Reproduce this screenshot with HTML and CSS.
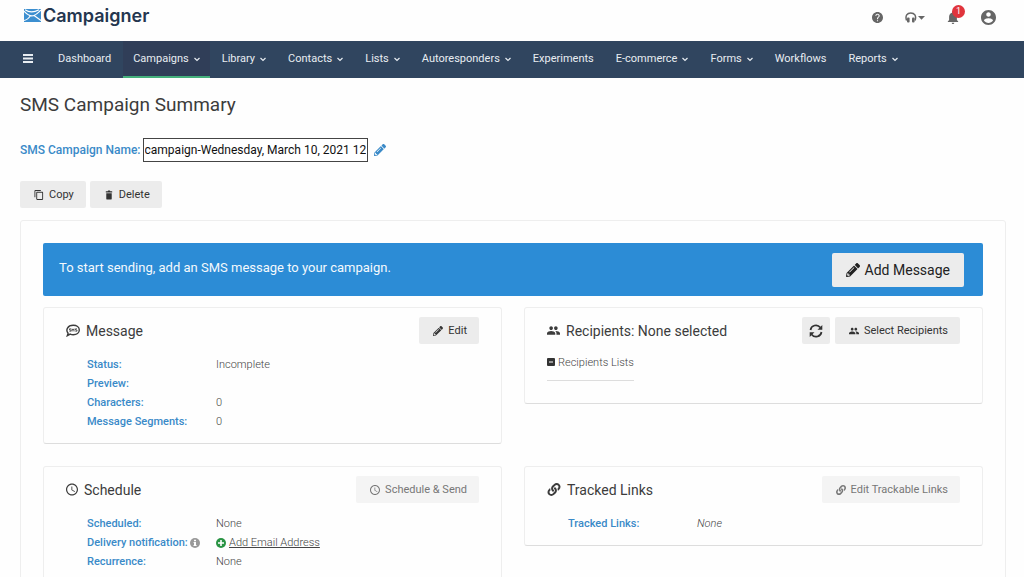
FILE: index.html
```html
<!DOCTYPE html>
<html lang="en">
<head>
    <meta charset="UTF-8">
    <meta name="viewport" content="width=device-width, initial-scale=1.0">
    <title>SMS Campaign Summary</title>
    <link rel="stylesheet" href="styles.css">
</head>
<body>
    <!-- shared icons -->
    <svg class="sprite" aria-hidden="true">
        <symbol id="i-pencil" viewBox="0 0 512 512"><path d="M497.9 142.1l-46.1 46.1c-4.7 4.7-12.3 4.7-17 0l-111-111c-4.7-4.7-4.7-12.3 0-17l46.1-46.1c18.7-18.7 49.1-18.7 67.9 0l60.1 60.1c18.8 18.7 18.8 49.1 0 67.9zM284.2 99.8L21.6 362.4.4 483.9c-2.9 16.4 11.4 30.6 27.8 27.8l121.5-21.3 262.6-262.6c4.7-4.7 4.7-12.3 0-17l-111-111c-4.8-4.7-12.4-4.7-17.1 0zM124.1 339.9c-5.5-5.5-5.5-14.3 0-19.8l154-154c5.5-5.5 14.3-5.5 19.8 0s5.5 14.3 0 19.8l-154 154c-5.5 5.5-14.3 5.5-19.8 0zM88 424h48v36.3l-64.500 11.300-31.100-31.100L51.700 376H88v48z"/></symbol>
        <symbol id="i-link" viewBox="0 0 512 512"><path d="M326.612 185.391c59.747 59.809 58.927 155.698.36 214.59-.11.12-.24.25-.36.37l-67.2 67.2c-59.27 59.27-155.699 59.262-214.96 0-59.27-59.26-59.27-155.7 0-214.96l37.106-37.106c9.84-9.84 26.786-3.3 27.294 10.606.648 17.722 3.826 35.527 9.69 52.721 1.986 5.822.567 12.262-3.783 16.612l-13.087 13.087c-28.026 28.026-28.905 73.66-1.155 101.96 28.024 28.579 74.086 28.749 102.325.51l67.2-67.19c28.191-28.191 28.073-73.757 0-101.83-3.701-3.694-7.429-6.564-10.341-8.569a16.037 16.037 0 0 1-6.947-12.606c-.396-10.567 3.348-21.456 11.698-29.806l21.054-21.055c5.521-5.521 14.182-6.199 20.584-1.731a152.482 152.482 0 0 1 20.522 17.197zM467.547 44.449c-59.261-59.262-155.69-59.27-214.96 0l-67.2 67.2c-.12.12-.25.25-.36.37-58.566 58.892-59.387 154.781.36 214.59a152.454 152.454 0 0 0 20.521 17.196c6.402 4.468 15.064 3.789 20.584-1.731l21.054-21.055c8.35-8.35 12.094-19.239 11.698-29.806a16.037 16.037 0 0 0-6.947-12.606c-2.912-2.005-6.64-4.875-10.341-8.569-28.073-28.073-28.191-73.639 0-101.83l67.2-67.19c28.239-28.239 74.3-28.069 102.325.51 27.75 28.3 26.872 73.934-1.155 101.96l-13.087 13.087c-4.35 4.35-5.769 10.79-3.783 16.612 5.864 17.194 9.042 34.999 9.69 52.721.509 13.906 17.454 20.446 27.294 10.606l37.106-37.106c59.271-59.259 59.271-155.699.001-214.959z"/></symbol>
        <symbol id="i-clock" viewBox="2 2 20 20"><path d="M11.99 2C6.47 2 2 6.48 2 12s4.47 10 9.99 10C17.52 22 22 17.52 22 12S17.52 2 11.99 2zM12 20c-4.42 0-8-3.58-8-8s3.58-8 8-8 8 3.58 8 8-3.58 8-8 8zm.5-13H11v6l5.25 3.15.75-1.23-4.5-2.67z"/></symbol>
        <symbol id="i-group" viewBox="1 1 22 22"><path d="M16 11c1.66 0 2.99-1.34 2.99-3S17.66 5 16 5c-1.66 0-3 1.34-3 3s1.34 3 3 3zm-8 0c1.66 0 2.99-1.34 2.99-3S9.66 5 8 5C6.34 5 5 6.34 5 8s1.34 3 3 3zm0 2c-2.33 0-7 1.17-7 3.5V19h14v-2.5c0-2.33-4.67-3.5-7-3.5zm8 0c-.29 0-.62.02-.97.05 1.16.84 1.97 1.97 1.97 3.45V19h6v-2.5c0-2.33-4.67-3.5-7-3.5z"/></symbol>
        <symbol id="i-down" viewBox="0 0 6 6"><path d="M.5 2L3 4.400 5.500 2" fill="none" stroke="currentColor" stroke-width="1.200"/></symbol>
    </svg>

    <header class="topbar">
        <a class="logo" href="#">
            <svg viewBox="0 0 17 13" aria-hidden="true">
                <rect width="17" height="13" fill="#3c8fd0"/>
                <path d="M0 2.200C4 6.500 7.500 7.500 10 6.500 13 5.300 15 2.800 17 1M0 11.500C2.500 11 5 9 6.500 6.500M10 6.500L17 11.500M1 .8C5 3.500 10 3.500 15 .8" fill="none" stroke="#fff" stroke-width="1.100"/>
            </svg>
            <span>Campaigner</span>
        </a>
        <div class="tools">
            <button class="tool" aria-label="Help">
                <svg class="help" viewBox="2 2 20 20"><path d="M12 2C6.480 2 2 6.480 2 12s4.480 10 10 10 10-4.480 10-10S17.520 2 12 2zm1 17h-2v-2h2v2zm2.070-7.750l-.9.92C13.450 12.900 13 13.500 13 15h-2v-.5c0-1.100.45-2.100 1.170-2.830l1.240-1.260c.37-.36.59-.86.59-1.410 0-1.100-.9-2-2-2s-2 .9-2 2H8c0-2.210 1.790-4 4-4s4 1.790 4 4c0 .88-.36 1.680-.93 2.250z"/></svg>
            </button>
            <button class="tool" aria-label="Support">
                <svg class="headset" viewBox="0 0 20 11"><path d="M1.600 8.500C-.2 3.500 2.300 .9 5.800 .9S11.800 3.500 10 8.500" fill="none" stroke="currentColor" stroke-width="1.500"/><rect x="2" y="5.500" width="2.600" height="5" rx="1"/><rect x="7" y="5.500" width="2.600" height="5" rx="1"/><path d="M13 4h7l-3.500 3.700z"/></svg>
            </button>
            <button class="tool" aria-label="Notifications">
                <svg class="bell" viewBox="4 2 16 20"><path d="M12 22c1.100 0 2-.9 2-2h-4c0 1.100.89 2 2 2zm6-6v-5c0-3.070-1.640-5.640-4.500-6.320V4c0-.83-.67-1.500-1.500-1.500s-1.500.67-1.500 1.500v.68C7.630 5.360 6 7.920 6 11v5l-2 2v1h16v-1l-2-2z"/></svg>
                <span class="badge">1</span>
            </button>
            <button class="tool" aria-label="Account">
                <svg class="account" viewBox="2 2 20 20"><path d="M12 2C6.480 2 2 6.480 2 12s4.480 10 10 10 10-4.480 10-10S17.520 2 12 2zm0 3c1.660 0 3 1.340 3 3s-1.340 3-3 3-3-1.340-3-3 1.340-3 3-3zm0 14.200c-2.500 0-4.710-1.280-6-3.220.03-1.990 4-3.080 6-3.080 1.990 0 5.970 1.090 6 3.080-1.290 1.940-3.500 3.220-6 3.220z"/></svg>
            </button>
        </div>
    </header>

    <nav class="nav">
        <button class="menu" aria-label="Menu"><svg viewBox="0 0 10 9"><path d="M0 0h10v2H0zM0 3.500h10v2H0zM0 7h10v2H0z"/></svg></button>
        <a href="#">Dashboard</a>
        <a href="#" class="active">Campaigns <svg><use href="#i-down"/></svg></a>
        <a href="#">Library <svg><use href="#i-down"/></svg></a>
        <a href="#">Contacts <svg><use href="#i-down"/></svg></a>
        <a href="#">Lists <svg><use href="#i-down"/></svg></a>
        <a href="#">Autoresponders <svg><use href="#i-down"/></svg></a>
        <a href="#">Experiments</a>
        <a href="#">E-commerce <svg><use href="#i-down"/></svg></a>
        <a href="#">Forms <svg><use href="#i-down"/></svg></a>
        <a href="#">Workflows</a>
        <a href="#">Reports <svg><use href="#i-down"/></svg></a>
    </nav>

    <main class="page">
        <h1>SMS Campaign Summary</h1>

        <div class="name-row">
            <label for="campaign-name">SMS Campaign Name:</label>
            <input type="text" id="campaign-name" value="campaign-Wednesday, March 10, 2021 12">
            <button class="edit-name" aria-label="Edit name"><svg><use href="#i-pencil"/></svg></button>
        </div>

        <div class="actions">
            <button class="btn">
                <svg viewBox="1 1 22 22"><path d="M16 1H4c-1.100 0-2 .9-2 2v14h2V3h12V1zm3 4H8c-1.100 0-2 .9-2 2v14c0 1.100.9 2 2 2h11c1.100 0 2-.9 2-2V7c0-1.100-.9-2-2-2zm0 16H8V7h11v14z"/></svg>
                Copy
            </button>
            <button class="btn">
                <svg viewBox="1 1 22 22"><path d="M6 8h12v12c0 1-1 2-2 2H8c-1 0-2-1-2-2zM5 3.500h4l1-1.500h4l1 1.500h4V6.500H5z"/></svg>
                Delete
            </button>
        </div>

        <div class="panel">
            <div class="banner">
                <p>To start sending, add an SMS message to your campaign.</p>
                <button class="btn btn-large"><svg><use href="#i-pencil"/></svg>Add Message</button>
            </div>

            <div class="cards">
                <section class="card">
                    <div class="card-head">
                        <h2>
                            <svg class="wide" viewBox="0 0 14 12"><path d="M1.300 11.200L2.100 8.800C-.6 5.500 1.500 .8 7.200 .8c3.500 0 6.100 2 6.100 4.700s-2.600 4.700-6.100 4.700c-1.100 0-2.100-.2-3-.6z" fill="none" stroke="currentColor" stroke-width="1.400"/><path d="M5 4.300H3.500v1.200H5v1.200H3.300M6 7V4.300l1 1.500 1-1.500V7M11 4.300H9.500v1.200H11v1.200H9.300" fill="none" stroke="currentColor" stroke-width=".8"/></svg>
                            Message
                        </h2>
                        <button class="btn"><svg><use href="#i-pencil"/></svg>Edit</button>
                    </div>
                    <dl class="fields">
                        <dt>Status:</dt><dd>Incomplete</dd>
                        <dt>Preview:</dt><dd></dd>
                        <dt>Characters:</dt><dd>0</dd>
                        <dt>Message Segments:</dt><dd>0</dd>
                    </dl>
                </section>

                <section class="card">
                    <div class="card-head">
                        <h2><svg><use href="#i-group"/></svg>Recipients: None selected</h2>
                        <button class="btn btn-icon" aria-label="Refresh">
                            <svg viewBox="0 0 14 14"><path d="M1.500 6A5.500 5.500 0 0 1 11.300 3.500M12.500 8A5.500 5.500 0 0 1 2.700 10.500" fill="none" stroke="currentColor" stroke-width="1.700"/><path d="M13.300 1v4.800H8.500zM.7 13v-4.800h4.800z"/></svg>
                        </button>
                        <button class="btn"><svg><use href="#i-group"/></svg>Select Recipients</button>
                    </div>
                    <div class="lists">
                        <svg viewBox="0 0 8 8"><rect width="8" height="8" rx="1"/><path d="M2 3.500h4v1H2z" fill="#fff"/></svg>
                        Recipients Lists
                    </div>
                </section>

                <section class="card">
                    <div class="card-head">
                        <h2><svg class="small"><use href="#i-clock"/></svg>Schedule</h2>
                        <button class="btn" disabled><svg><use href="#i-clock"/></svg>Schedule &amp; Send</button>
                    </div>
                    <dl class="fields">
                        <dt>Scheduled:</dt><dd>None</dd>
                        <dt>Delivery notification: <svg class="info" viewBox="0 0 10 10"><circle cx="5" cy="5" r="5"/><path d="M4 1.800h2v1.500H4zM3.600 4H6v3h.6v1H3.500V7H4V5h-.4z" fill="#fff"/></svg></dt>
                        <dd><svg class="add" viewBox="0 0 10 10"><circle cx="5" cy="5" r="5"/><path d="M4.200 2h1.600v2.200H8v1.600H5.800V8H4.200V5.800H2V4.200h2.200z" fill="#fff"/></svg><a href="#">Add Email Address</a></dd>
                        <dt>Recurrence:</dt><dd>None</dd>
                    </dl>
                </section>

                <section class="card">
                    <div class="card-head">
                        <h2><svg class="wide"><use href="#i-link"/></svg>Tracked Links</h2>
                        <button class="btn" disabled><svg><use href="#i-link"/></svg>Edit Trackable Links</button>
                    </div>
                    <dl class="fields">
                        <dt>Tracked Links:</dt><dd><em>None</em></dd>
                    </dl>
                </section>
            </div>
        </div>
    </main>
</body>
</html>
```
FILE: styles.css
```css
* {
    box-sizing: border-box;
}

body {
    margin: 0;
    background-color: #fefefe;
    color: #3c3c3c;
    font-family: Roboto, "Liberation Sans", sans-serif;
    font-size: 11px;
}

button {
    font-family: inherit;
    border: none;
    cursor: pointer;
}

svg {
    fill: currentColor;
    flex: none;
}

.sprite {
    display: none;
}

/* top bar */
.topbar {
    display: flex;
    justify-content: space-between;
    height: 41px;
    padding: 0 28px 0 24px;
}

.logo {
    display: flex;
    align-items: center;
    gap: 2px;
    height: 30px;
    color: #24364f;
    font-family: Inter, "Open Sans", sans-serif;
    font-size: 18px;
    font-weight: 600;
    text-decoration: none;
}

.logo svg {
    width: 17px;
    height: 13px;
}

.tools {
    display: flex;
    align-items: center;
    gap: 22px;
    height: 35px;
}

.tool {
    position: relative;
    display: flex;
    padding: 0;
    background: none;
    color: #666;
}

.help {
    width: 11px;
    height: 11px;
}

.headset {
    width: 20px;
    height: 11px;
}

.bell {
    width: 12px;
    height: 13px;
}

.account {
    width: 15px;
    height: 15px;
}

.badge {
    position: absolute;
    top: -6px;
    left: 5px;
    width: 13px;
    border-radius: 50%;
    background-color: #e0343c;
    color: white;
    font-size: 9px;
    line-height: 13px;
    text-align: center;
}

/* navigation */
.nav {
    display: flex;
    gap: 2px;
    height: 37px;
    padding-left: 12px;
    background-color: #30455f;
}

.nav a,
.menu {
    display: flex;
    align-items: center;
    gap: 5px;
    padding: 0 10px;
    border-bottom: 2px solid transparent;
    background: none;
    color: #e8edf2;
    font-size: 11px;
    text-decoration: none;
}

.nav .menu {
    padding: 0 13px 0 11px;
}

.nav a.active {
    border-color: #45b07c;
    background-color: #303e58;
}

.nav svg {
    width: 6px;
    height: 6px;
}

.nav .menu svg {
    width: 10px;
    height: 9px;
}

/* page */
.page {
    padding: 15px 18px 20px 20px;
}

h1 {
    margin: 0;
    font-size: 19px;
    font-weight: 400;
    line-height: 24px;
}

.name-row {
    display: flex;
    align-items: center;
    gap: 2px;
    margin-top: 21px;
    font-size: 12px;
}

.name-row label {
    color: #3a8ac8;
    font-weight: 500;
}

.name-row input {
    width: 225px;
    height: 24px;
    padding: 0 1px;
    border: 1px solid #444;
    color: #111;
    font-family: inherit;
    font-size: 12px;
}

.edit-name {
    display: flex;
    padding: 0 4px;
    background: none;
    color: #3a8ac8;
}

.edit-name svg {
    width: 12px;
    height: 12px;
}

.actions {
    display: flex;
    gap: 4px;
    margin: 19px 0 12px;
}

.btn {
    display: flex;
    align-items: center;
    gap: 5px;
    height: 27px;
    padding: 0 12px 0 14px;
    border-radius: 2px;
    background-color: #ececec;
    color: #333;
    font-size: 11px;
}

.btn svg {
    width: 10px;
    height: 10px;
}

.btn:disabled {
    background-color: #f4f4f4;
    color: #777;
}

.btn-icon {
    padding: 0 7px;
}

.btn-icon svg {
    width: 14px;
    height: 14px;
}

.btn-large {
    height: 34px;
    padding: 0 14px;
    color: #222;
    font-size: 14px;
}

.btn-large svg {
    width: 14px;
    height: 14px;
}

.panel {
    padding: 22px;
    border: 1px solid #eee;
    border-radius: 3px;
}

.banner {
    display: flex;
    align-items: center;
    justify-content: space-between;
    height: 53px;
    padding: 0 19px 0 16px;
    border-radius: 2px;
    background-color: #2c8cd6;
    color: #f4f9fd;
    font-size: 13px;
}

.banner p {
    margin: 0 0 5px;
}

.cards {
    display: grid;
    grid-template-columns: 1fr 1fr;
    align-items: start;
    gap: 22px;
    margin-top: 11px;
}

.card {
    padding: 9px 22px 12px;
    border: 1px solid #eee;
    border-bottom-color: #ddd;
    border-radius: 3px;
}

.card-head {
    display: flex;
    align-items: center;
    gap: 5px;
}

h2 {
    display: flex;
    align-items: center;
    gap: 6px;
    margin: 0 auto 0 0;
    font-size: 14px;
    font-weight: 400;
}

h2 svg {
    width: 13px;
    height: 13px;
}

h2 .small {
    width: 12px;
}

h2 .wide {
    width: 14px;
}

.fields {
    display: grid;
    grid-template-columns: 129px 1fr;
    margin: 11px 0 0 21px;
    line-height: 19px;
}

.fields dt {
    color: #3a8ac8;
    font-weight: 500;
    white-space: nowrap;
}

.fields dd {
    min-height: 19px;
    margin: 0;
    color: #444;
    font-weight: 300;
}

.fields svg {
    width: 10px;
    height: 10px;
    vertical-align: -2px;
}

.fields a {
    color: #444;
}

.info {
    color: #999;
}

.add {
    margin-right: 3px;
    color: #2a9444;
}

.lists {
    display: inline-flex;
    align-items: center;
    gap: 3px;
    height: 37px;
    margin-bottom: 10px;
    border-bottom: 1px solid #ddd;
    color: #444;
    font-weight: 300;
}

.lists svg {
    width: 8px;
    height: 8px;
    color: #333;
}
```
